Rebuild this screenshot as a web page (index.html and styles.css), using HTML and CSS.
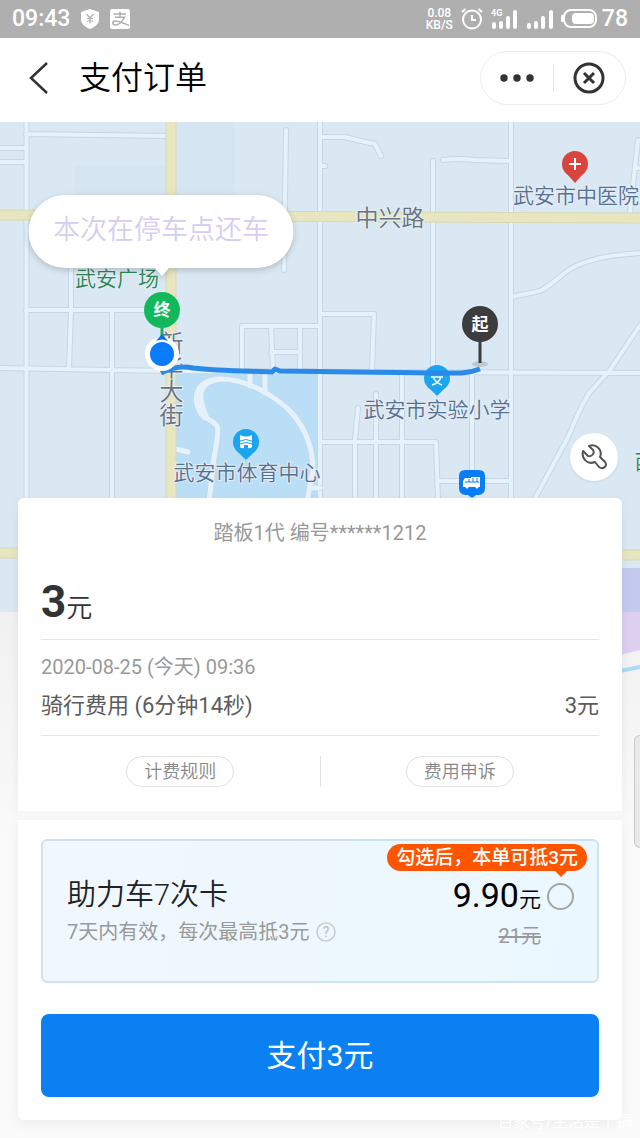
FILE: index.html
```
<!DOCTYPE html>
<html lang="zh-CN">
<head>
    <meta charset="UTF-8">
    <meta name="viewport" content="width=device-width, initial-scale=1.0">
    <title>支付订单</title>
    <link rel="stylesheet" href="styles.css">
</head>
<body>
    <div class="status-bar">
        <div class="status-left">
            <span class="clock">09:43</span>
            <svg width="20" height="20" viewBox="0 0 20 20">
                <path d="M10 0 L19 3 V10 C19 15 15 18 10 20 C5 18 1 15 1 10 V3 Z" fill="#fff"/>
                <path d="M6.500 5 L10 9 L13.500 5 M10 9 V14.500 M7 9.500 H13 M7 12 H13" fill="none" stroke="#afafaf" stroke-width="1.200"/>
            </svg>
            <svg width="20" height="20" viewBox="0 0 20 20">
                <rect width="20" height="20" rx="2" fill="#fff"/>
                <path d="M3.500 5 H16 M10 2.500 V8 M5 8.300 H14.500 C13 12 9 16 5.500 16 C2 16 2 12.500 5 12 C8 11.500 14 14.500 19 16.500" fill="none" stroke="#afafaf" stroke-width="1.500"/>
            </svg>
        </div>
        <div class="status-right">
            <div class="speed">
                <span>0.08</span>
                <span>KB/S</span>
            </div>
            <svg width="22" height="22" viewBox="0 0 22 22" fill="none" stroke="#fff" stroke-width="2">
                <circle cx="11" cy="11.500" r="9"/>
                <path d="M11 7 V12 H15 M1 4 L4.500 1 M21 4 L17.500 1"/>
            </svg>
            <svg width="28" height="24" viewBox="0 0 28 24" fill="#fff">
                <text x="0" y="9" class="net-label">4G</text>
                <rect x="1" y="15" width="4" height="7" rx="2"/>
                <rect x="8" y="14" width="4" height="8" rx="2"/>
                <rect x="15" y="9" width="4" height="13" rx="2"/>
                <rect x="22" y="3" width="4" height="19" rx="2"/>
            </svg>
            <svg width="26" height="24" viewBox="0 0 26 24" fill="#fff">
                <rect x="0" y="16" width="4" height="6" rx="2"/>
                <rect x="7" y="14" width="4" height="8" rx="2"/>
                <rect x="14" y="9" width="4" height="13" rx="2"/>
                <rect x="22" y="3" width="4" height="19" rx="2"/>
            </svg>
            <svg width="36" height="20" viewBox="0 0 36 20">
                <rect x="3" y="1" width="32" height="17" rx="7" fill="none" stroke="#fff" stroke-width="2"/>
                <rect x="11" y="4" width="22" height="11" rx="4" fill="#fff"/>
                <rect x="0" y="6" width="3" height="7" rx="1" fill="#fff"/>
            </svg>
            <span class="battery">78</span>
        </div>
    </div>

    <header class="header">
        <button class="back" aria-label="返回">
            <svg width="20" height="32" viewBox="0 0 20 32"><path d="M18 1 L2 16 L18 31" fill="none" stroke="#333" stroke-width="2.500"/></svg>
        </button>
        <h1>支付订单</h1>
        <div class="capsule">
            <button aria-label="更多">
                <svg width="34" height="8" viewBox="0 0 34 8" fill="#333"><circle cx="4" cy="4" r="3.700"/><circle cx="17" cy="4" r="3.700"/><circle cx="30" cy="4" r="3.700"/></svg>
            </button>
            <button aria-label="关闭">
                <svg width="32" height="32" viewBox="0 0 32 32" fill="none" stroke="#333" stroke-width="3"><circle cx="16" cy="16" r="14"/><path d="M11 11 L21 21 M21 11 L11 21"/></svg>
            </button>
        </div>
    </header>

    <main class="main">
        <svg class="map" viewBox="0 122 640 560" preserveAspectRatio="xMidYMin slice">
            <defs>
                <g id="roads">
                    <path d="M26.500 122 V500 M26 134 L168 136 M0 148 H26 M0 162 H26 M286 130 L284 270 M320 122 V500"/>
                    <path d="M320 137 H345 Q360 141 375 144 L381 156 M320 166 H325 M433 161 V372 M443 160 Q460 158 475 160 L510 161 M511 122 V500"/>
                    <path d="M511 297 L540 291 C557 282 562 272 576 266 C595 257 615 255 640 253 M638 140 L630 212 M636 168 H640 M320 314 H374 L372 372"/>
                    <path d="M26 310 H160 M71 268 V310 L69 368 M112 310 V500 M0 368 L170 371 L640 373"/>
                    <path d="M242 372 V326 H320 M271 326 L273 372 M300 326 V372 M271 352 H300"/>
                    <path d="M402 372 V500 M376 394 V500 M358 408 L355 440 V500 M320 442 H436 L438 500 M472 372 V500 M438 481 H511"/>
                    <path d="M645 318 L610 370 L590 392 C577 411 573 428 566 441 L533 502"/>
                </g>
                <g id="park-roads">
                    <path d="M209 502 L213 466 C214 454 220 432 217 426 C212 418 206 421 201 414 C190 394 199 380 220 379 C248 379 276 397 291 412 C306 429 313 448 313 470 L307 502"/>
                    <path d="M207 418 C194 390 203 382 220 379 M250 372 V386 M265 372 V393 M176 449 L188 452 M313 488 H320"/>
                </g>
            </defs>

            <rect y="122" width="640" height="490" fill="#dae8f3"/>
            <path d="M75 166 H166 V215 H75 Z M176 122 H234 V215 H176 Z" fill="#d6e5f2"/>
            <path d="M620 568 H640 V612 H620 Z" fill="#c4c9ef"/>
            <path d="M620 612 H640 V650 L620 655 Z" fill="#dccff0"/>
            <path d="M620 671 L640 667" stroke="#a9dcf6" stroke-width="4"/>

            <use href="#roads" class="road-edge"/>
            <use href="#roads" class="road"/>
            <path d="M176 374 H317 V500 H176 Z" fill="#b9def6"/>
            <use href="#park-roads" class="road-edge"/>
            <use href="#park-roads" class="road park-road"/>

            <path d="M0 215 L640 218 M171 122 V500 M0 553 L640 555" class="main-edge"/>
            <path d="M0 215 L640 218 M171 122 V500 M0 553 L640 555" class="main-road"/>

            <!-- places -->
            <text x="390" y="226" class="label street">中兴路</text>
            <text x="169" y="331" class="label street vertical">新华大街</text>
            <text x="117" y="286" class="label green">武安广场</text>
            <text x="576" y="203" class="label">武安市中医院</text>
            <text x="437" y="417" class="label">武安市实验小学</text>
            <text x="247" y="480" class="label">武安市体育中心</text>
            <text x="645" y="469" class="label green">西</text>

            <circle cx="575" cy="164" r="13" fill="#d8453e"/>
            <path d="M568 175 H582 L575 183 Z" fill="#d8453e"/>
            <path d="M575 158 V170 M569 164 H581" stroke="#fff" stroke-width="2"/>

            <g transform="translate(246 442)">
                <circle r="13" fill="#1aa5ee"/>
                <path d="M-7 11 H7 L0 18 Z" fill="#1aa5ee"/>
                <path d="M-6 -7 Q0 -4 6 -7 V5 Q4 7 2 6 V3 H-2 V6 Q-4 7 -6 5 Z" fill="#fff"/>
                <path d="M-6 -1 Q0 -4 6 -1 M-6 2 Q0 -1 6 2" fill="none" stroke="#1aa5ee"/>
            </g>

            <path d="M465 470 H479 Q485 470 485 476 V488 Q485 494 479 495 H476 L472 498 L468 495 H465 Q459 494 459 488 V476 Q459 470 465 470 Z" fill="#0a7cf5"/>
            <path d="M463 481 L465 478 H471 V477 H480 V487 H463 Z" fill="#fff"/>
            <path d="M465 482 H479 M469 479 V482 M473 478 V482 M477 478 V482" stroke="#0a7cf5"/>
            <circle cx="467" cy="487" r="1.500" fill="#fff"/><circle cx="477" cy="487" r="1.500" fill="#fff"/>

            <circle cx="437" cy="378" r="13" fill="#1aa5ee"/>
            <path d="M430 389 H444 L437 396 Z" fill="#1aa5ee"/>

            <!-- ride track -->
            <ellipse cx="480" cy="364" rx="8" ry="3" fill="#b9c9d4"/>
            <path d="M161 373 C174 366 184 366 193 368 C220 371 250 371 272 372 L275 369 L280 371 L437 373 C455 373 467 374 480 369" class="track"/>
            <path d="M431 377 H443 M432 385 Q439 383 441 377 M433 377 Q436 383 442 385" fill="none" stroke="#fff" stroke-width="1.500"/>

            <path d="M480 340 V363" stroke="#3c3c3e" stroke-width="3"/>
            <circle cx="480" cy="324" r="18" fill="#3c3c3e"/>
            <text x="480" y="330" class="pin-text">起</text>

            <path d="M162 326 V340" stroke="#12b35b" stroke-width="3"/>
            <circle cx="162" cy="310" r="18" fill="#11b95c"/>
            <text x="162" y="316" class="pin-text">终</text>

            <circle cx="162" cy="354" r="17" fill="#fff"/>
            <path d="M162 334 L168 341 Q162 338 156 341 Z" fill="#0a6fd6"/>
            <circle cx="162" cy="354" r="12" fill="#087cfa"/>

            <path class="bubble" d="M65 195 H257 A36 36 0 0 1 257 268 H169 L162 276 L155 268 H65 A36 36 0 0 1 65 195 Z"/>
            <text x="161" y="239" class="bubble-text">本次在停车点还车</text>
        </svg>

        <button class="repair" aria-label="报修">
            <svg width="28" height="28" viewBox="0 0 28 28"><path d="M9 3 C16 0 23 7 20 14 L25 19 C28 23 23 27 19 24 L15 19 C8 22 1 16 3 8 L8 13 C12 14 15 10 13 7 Z" fill="none" stroke="#555" stroke-width="2" stroke-linejoin="round"/></svg>
        </button>
        <div class="side-handle"></div>

        <section class="card order">
            <p class="bike">踏板1代 编号******1212</p>
            <p class="total"><strong>3</strong>元</p>
            <div class="detail">
                <time>2020-08-25 (今天) 09:36</time>
                <div class="fee"><span>骑行费用 (6分钟14秒)</span><span>3元</span></div>
            </div>
            <div class="actions">
                <div><button>计费规则</button></div>
                <div><button>费用申诉</button></div>
            </div>
        </section>

        <div class="card-gap"></div>

        <section class="card checkout">
            <div class="offer">
                <span class="tip">勾选后，本单可抵3元</span>
                <div class="offer-info">
                    <label for="ride-card">助力车7次卡</label>
                    <p>7天内有效，每次最高抵3元
                        <svg width="20" height="20" viewBox="0 0 20 20"><circle cx="10" cy="10" r="9" fill="none" stroke="#ccc" stroke-width="1.500"/><text x="10" y="15" class="help">?</text></svg>
                    </p>
                </div>
                <div class="price">
                    <p><span>9.90</span>元</p>
                    <del>21元</del>
                </div>
                <input type="radio" id="ride-card" name="ride-card">
            </div>
            <button class="pay">支付3元</button>
        </section>
        <p class="watermark">百家号/生活是个锅</p>
    </main>
</body>
</html>
```
FILE: styles.css
```
* {
    box-sizing: border-box;
}
body {
    margin: 0;
    font-family: Roboto, "Noto Sans CJK SC", sans-serif;
    color: #333;
    background-color: #fafafa;
}
p, h1 {
    margin: 0;
    font-weight: inherit;
}
button {
    padding: 0;
    border: none;
    background: none;
    font-family: inherit;
    cursor: pointer;
}
svg {
    display: block;
}

.status-bar {
    display: flex;
    justify-content: space-between;
    align-items: center;
    height: 38px;
    padding: 0 12px;
    background-color: #afafaf;
    color: #fff;
}
.status-left, .status-right {
    display: flex;
    align-items: center;
    gap: 10px;
}
.status-right {
    gap: 8px;
}
.clock, .battery {
    font-size: 23px;
    font-weight: 500;
    line-height: 36px;
}
.battery {
    margin-left: -3px;
}
.speed {
    font-size: 12px;
    font-weight: 500;
    line-height: 12px;
    text-align: center;
}
.speed span {
    display: block;
    height: 12px;
    overflow: hidden;
}
.net-label {
    font-size: 9px;
    font-weight: 700;
}

.header {
    display: flex;
    align-items: center;
    height: 84px;
    padding: 0 14px 4px 29px;
    background-color: #fff;
}
.header h1 {
    flex: 1;
    margin-left: 30px;
    font-size: 32px;
    font-weight: 350;
    line-height: 44px;
    color: #000;
}
.capsule {
    display: flex;
    width: 146px;
    height: 54px;
    border: 1px solid #ececec;
    border-radius: 27px;
}
.capsule button {
    display: flex;
    flex: 1;
    align-items: center;
    justify-content: center;
    margin: 12px 0;
}
.capsule button + button {
    border-left: 1px solid #e5e5e5;
}

.main {
    position: relative;
    padding: 376px 18px 18px;
    background: linear-gradient(#f1f1f1 500px, #fafafa 720px);
}
.map {
    position: absolute;
    top: 0;
    left: 0;
    width: 100%;
    height: 560px;
}
.road-edge, .road {
    fill: none;
    stroke: #c5d7e6;
    stroke-width: 6px;
    stroke-linecap: round;
    stroke-linejoin: round;
}
.road {
    stroke: #e6f2fb;
    stroke-width: 4px;
}
.park-road {
    stroke-width: 5px;
}
.main-edge {
    fill: none;
    stroke: #d9d9b5;
    stroke-width: 11px;
}
.main-road {
    fill: none;
    stroke: #e7e6c0;
    stroke-width: 9px;
}
.track {
    fill: none;
    stroke: #2a8ae9;
    stroke-width: 5px;
    stroke-linejoin: round;
}
.label {
    font-size: 21px;
    font-weight: 350;
    text-anchor: middle;
    fill: #56708f;
    stroke: #e4eef7;
    stroke-width: 2px;
    paint-order: stroke;
}
.street {
    font-size: 23px;
    fill: #667280;
}
.vertical {
    font-size: 24px;
    writing-mode: vertical-rl;
    text-anchor: start;
}
.green {
    fill: #2c8552;
}
.pin-text {
    font-size: 17px;
    font-weight: 700;
    text-anchor: middle;
    fill: #fff;
}
.bubble {
    fill: #fff;
    filter: drop-shadow(0 2px 3px rgba(0, 0, 0, 0.2));
}
.bubble-text {
    font-size: 27px;
    font-weight: 350;
    text-anchor: middle;
    fill: #d3cff3;
}
.repair {
    position: absolute;
    top: 311px;
    right: 22px;
    display: flex;
    align-items: center;
    justify-content: center;
    width: 48px;
    height: 48px;
    border-radius: 50%;
    background-color: #fff;
    box-shadow: 0 1px 3px rgba(0, 0, 0, 0.08);
}
.side-handle {
    position: absolute;
    top: 613px;
    right: 0;
    width: 6px;
    height: 113px;
    border: 1px solid #c9c9c9;
    border-right: none;
    border-radius: 6px 0 0 6px;
    background-color: #e9e9e9;
}

.card {
    position: relative;
    padding: 0 23px;
    background-color: #fff;
    box-shadow: 0 4px 12px rgba(0, 0, 0, 0.06);
}
.order {
    padding-bottom: 24px;
    border-radius: 6px 6px 0 0;
}
.card-gap {
    position: relative;
    height: 9px;
    background-color: #f7f7f7;
}
.bike {
    padding-top: 20px;
    font-size: 20px;
    line-height: 30px;
    text-align: center;
    color: #999;
}
.total {
    padding: 29px 0 6px;
    border-bottom: 1px solid #e5e5e5;
    font-size: 26px;
    font-weight: 350;
    line-height: 50px;
}
.total strong {
    font-size: 44px;
    font-weight: 700;
}
.detail {
    padding: 11px 0 13px;
    border-bottom: 1px solid #e5e5e5;
}
.detail time {
    display: block;
    font-size: 20px;
    line-height: 32px;
    color: #999;
}
.fee {
    display: flex;
    justify-content: space-between;
    padding-top: 7px;
    font-size: 22px;
    line-height: 32px;
    color: #5c5c5c;
}
.actions {
    display: flex;
    padding-top: 20px;
}
.actions div {
    flex: 1;
    text-align: center;
}
.actions div + div {
    border-left: 1px solid #e2e2e2;
}
.actions button {
    display: block;
    width: 108px;
    height: 31px;
    margin: 0 auto;
    border: 1px solid #e2e2e2;
    border-radius: 16px;
    font-size: 18px;
    font-weight: 350;
    line-height: 27px;
    color: #888;
}

.checkout {
    padding-top: 19px;
    padding-bottom: 23px;
    border-radius: 0 0 6px 6px;
}
.offer {
    position: relative;
    display: flex;
    height: 144px;
    padding: 34px 23px 0 24px;
    border: 2px solid #cfe2f1;
    border-radius: 6px;
    background: linear-gradient(100deg, #f1f7fe, #ebf7ff);
}
.offer-info {
    flex: 1;
}
.offer-info label {
    display: block;
    font-size: 29px;
    font-weight: 350;
    line-height: 40px;
    color: #222;
}
.offer-info p {
    display: flex;
    align-items: center;
    gap: 7px;
    font-size: 20px;
    line-height: 34px;
    color: #999;
}
.help {
    font-size: 14px;
    text-anchor: middle;
    fill: #bbb;
}
.tip {
    position: absolute;
    top: 3px;
    right: 10px;
    padding: 0 9px;
    border-radius: 14px;
    background-color: #ff5500;
    color: #fff;
    font-size: 19px;
    font-weight: 500;
    line-height: 27px;
}
.tip::after {
    content: "";
    position: absolute;
    top: 26px;
    right: 19px;
    border: 7px solid transparent;
    border-top-color: #ff5500;
    border-bottom: none;
}
.price {
    text-align: right;
}
.price p {
    font-size: 22px;
    font-weight: 350;
    line-height: 40px;
    color: #000;
}
.price span {
    font-size: 34px;
    font-weight: 400;
}
.price del {
    font-size: 20px;
    line-height: 32px;
    color: #999;
}
.offer input {
    appearance: none;
    width: 27px;
    height: 27px;
    margin: 8px 0 0 6px;
    border: 2px solid #a5a5a5;
    border-radius: 50%;
}
.offer input:checked {
    border: 8px solid #0b80f3;
}
.pay {
    display: block;
    width: 100%;
    height: 83px;
    margin-top: 31px;
    padding-bottom: 6px;
    border-radius: 8px;
    background-color: #0b80f3;
    color: #fff;
    font-size: 30px;
}
.watermark {
    position: absolute;
    right: 8px;
    bottom: 4px;
    font-size: 16px;
    line-height: 24px;
    color: #fff;
}
```
